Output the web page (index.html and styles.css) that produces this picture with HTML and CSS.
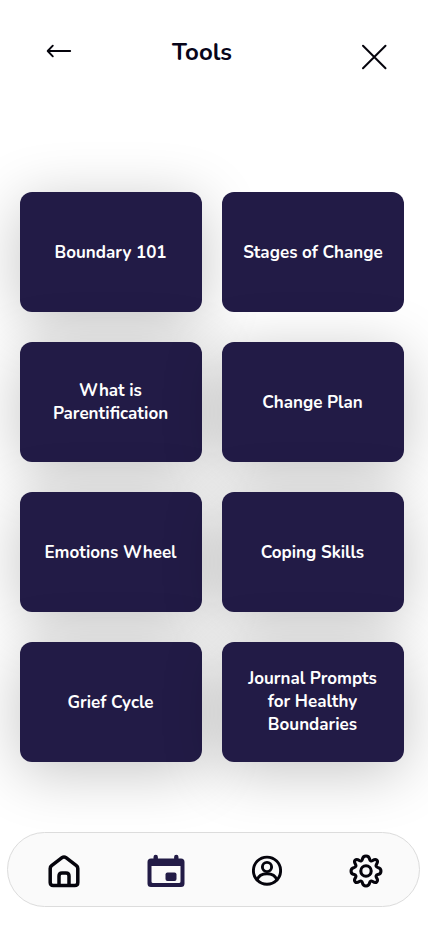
FILE: index.html
```html
<!DOCTYPE html>
<html lang="en">
<head>
<meta charset="utf-8">
<meta name="viewport" content="width=device-width, initial-scale=1">
<title>Tools</title>
<link rel="stylesheet" href="styles.css">
</head>
<body>
<header class="header">
  <svg class="back" width="26" height="16" viewBox="0 0 26 16"><path d="M24.200 8H2M6.800 2.700L1.700 8l5.100 5.300"/></svg>
  <h1 class="title">Tools</h1>
  <svg class="close" width="26" height="26" viewBox="0 0 26 26"><path d="M2 1.700l22.500 22.500M24.500 1.700L2 24.200"/></svg>
</header>
<main class="grid">
  <a class="card"><span>Boundary 101</span></a>
  <a class="card flat"><span>Stages of Change</span></a>
  <a class="card"><span>What is<br>Parentification</span></a>
  <a class="card"><span>Change Plan</span></a>
  <a class="card"><span>Emotions Wheel</span></a>
  <a class="card"><span>Coping Skills</span></a>
  <a class="card"><span>Grief Cycle</span></a>
  <a class="card tall"><span>Journal Prompts<br>for Healthy<br>Boundaries</span></a>
</main>
<nav class="nav">
  <svg class="home" width="32" height="34" viewBox="0 0 32 34"><path d="M2.200 14.500Q2.200 12.800 3.600 11.700L14 3.700Q16 2.200 18 3.700L28.400 11.700Q29.800 12.800 29.800 14.500V28.500Q29.800 31.500 26.800 31.500H5.200Q2.200 31.500 2.200 28.500ZM11 31V22Q11 19 14 19H18Q21 19 21 22V31"/></svg>
  <svg class="calendar" width="38" height="34" viewBox="0 0 38 34"><path fill-rule="evenodd" d="M6.500 4.500V3a2.200 2.200 0 0 1 4.400 0v1.500h16.200V3a2.200 2.200 0 0 1 4.400 0v1.500H34q3.500 0 3.500 3.500v21.500q0 3.500-3.500 3.500H4Q.5 33 .5 29.500V8Q.5 4.500 4 4.500zM4.500 12v15.500q0 1.500 1.500 1.500h26q1.500 0 1.500-1.500V12z"/><rect x="18.500" y="18.500" width="11" height="8.500" rx="2"/></svg>
  <svg class="profile" width="30" height="32" viewBox="0 0 30 32"><circle cx="15" cy="15.700" r="13.600"/><circle cx="15" cy="12" r="4.600"/><path d="M5 25C8 16.700 22 16.700 25 25"/></svg>
  <svg class="settings" width="34" height="34" viewBox="0 0 34 34"><circle cx="17" cy="17" r="5.200"/><path d="M13.400 5.200C14.200 1 19.800 1 20.600 5.200C21 7 22.200 7.400 23.700 6.500C27.200 4.100 29.900 6.800 27.500 10.300C26.600 11.800 27 13 28.800 13.400C33 14.200 33 19.800 28.800 20.600C27 21 26.600 22.200 27.500 23.700C29.900 27.200 27.200 29.900 23.700 27.500C22.200 26.600 21 27 20.600 28.800C19.800 33 14.200 33 13.400 28.800C13 27 11.800 26.600 10.300 27.500C6.800 29.900 4.100 27.200 6.500 23.700C7.400 22.200 7 21 5.200 20.600C1 19.800 1 14.200 5.200 13.400C7 13 7.400 11.800 6.500 10.300C4.100 6.800 6.800 4.100 10.300 6.500C11.800 7.400 13 7 13.400 5.200Z"/></svg>
</nav>
</body>
</html>
```
FILE: styles.css
```css
* {
  box-sizing: border-box;
}

body {
  margin: 0;
  height: 926px;
  overflow: hidden;
  background: #fff;
  font-family: Nunito, Lato, "Noto Sans", sans-serif;
}

svg {
  display: block;
  fill: none;
  stroke: #05040c;
  stroke-linecap: round;
  stroke-linejoin: round;
}

.header {
  display: grid;
  grid-template-columns: 26px 1fr 26px;
  align-items: start;
  height: 192px;
  padding: 36px 41px 0 46px;
}

.back {
  margin-top: 7px;
  stroke-width: 1.9;
}

.close {
  margin-top: 8px;
  stroke-width: 2;
}

.title {
  margin: 0 0 0 -29px;
  text-align: center;
  color: #080519;
  font-size: 24px;
  font-weight: 700;
  line-height: 32px;
}

.grid {
  display: grid;
  grid-template-columns: 182px 182px;
  grid-auto-rows: 120px;
  gap: 30px 20px;
  padding: 0 20px;
}

.card {
  display: flex;
  align-items: center;
  justify-content: center;
  padding-right: 1px;
  border-radius: 12px;
  background: #221b46;
  box-shadow: 0 10px 60px rgba(0, 0, 0, .23);
  color: #fff;
  font-size: 17px;
  font-weight: 700;
  line-height: 23px;
  text-align: center;
}

.flat {
  padding-right: 0;
  box-shadow: none;
}

.tall {
  padding-bottom: 1px;
}

.nav {
  display: grid;
  position: relative;
  grid-template-columns: 32px 38px 30px 34px;
  justify-content: space-between;
  align-items: center;
  width: 413px;
  height: 75px;
  margin: 70px 0 0 7px;
  padding: 2px 35.5px 0 39.5px;
  border: 1px solid #dcdcdc;
  border-radius: 38px;
  background: #fafafa;
}

.home {
  stroke-width: 3.5;
}

.calendar {
  fill: #221b46;
  stroke: none;
}

.profile {
  stroke-width: 2.9;
}

.settings {
  stroke-width: 3.1;
}
```
